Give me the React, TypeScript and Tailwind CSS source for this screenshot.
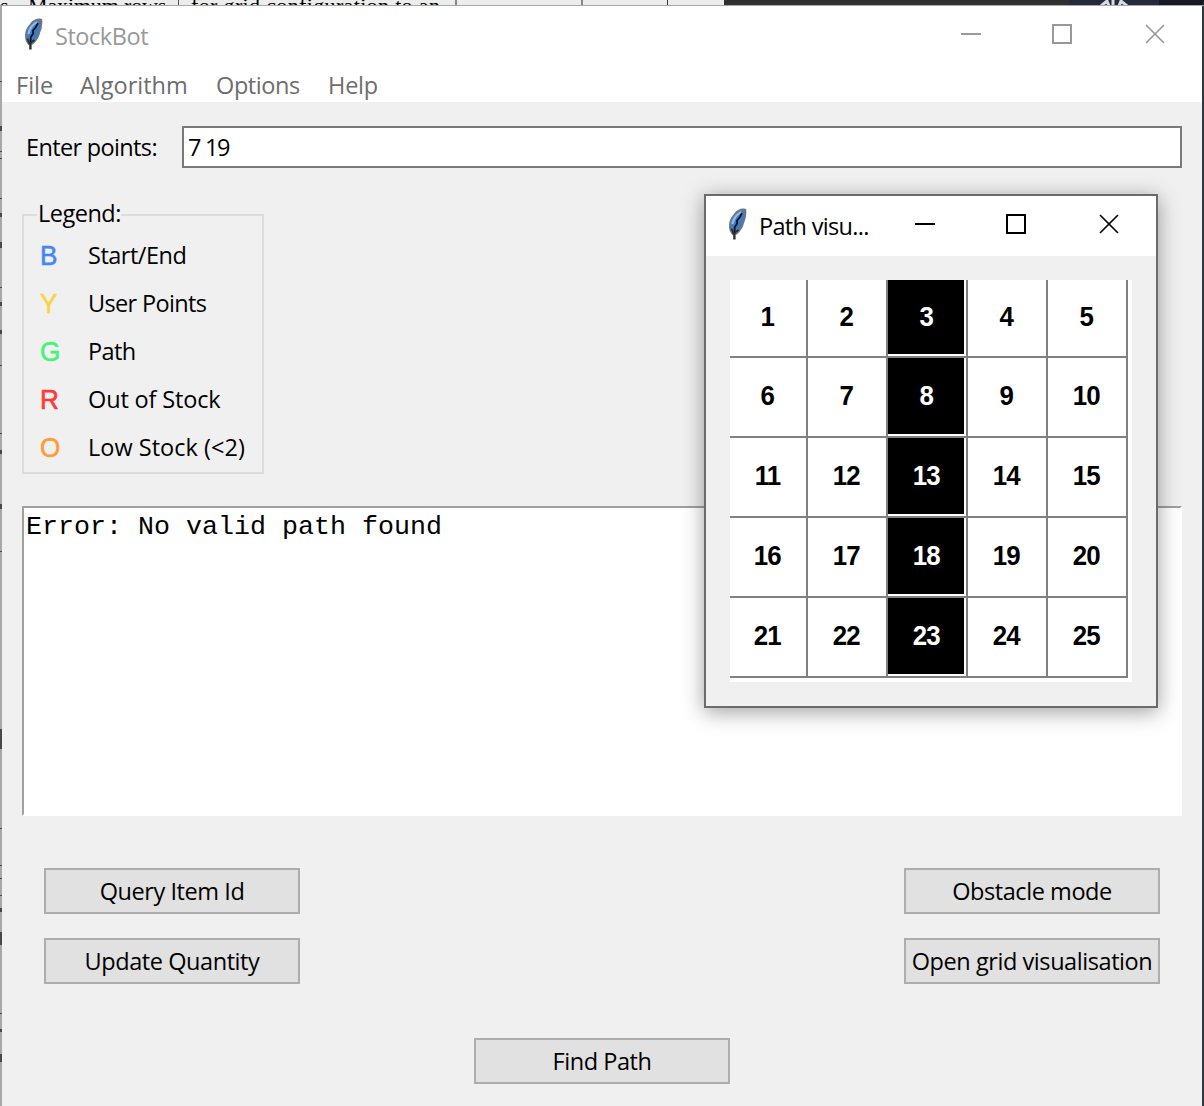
import type { ReactNode } from "react";

function Feather({ className = "" }: { className?: string }) {
  return (
    <svg viewBox="0 0 20 32" className={`h-8 w-5 ${className}`} fill="none">
      <path d="M18.3 1.6 C14.5 1 10 3 7.2 7 C4.5 10 2.6 14.5 3 18.5 C2.6 21 3.6 23.5 5.6 26 L9.6 25.6 C12.5 23 15 19 16 15.5 C18 11 18.8 6 18.3 1.6 Z" fill="#3f7cc6" stroke="#727679" strokeWidth="1.8" strokeLinejoin="round" />
      <path d="M14.5 4 C10 6 6.6 10 5.4 16" stroke="#8dbcf0" strokeWidth="2.2" />
      <path d="M15 5 L12.6 9.5 L10 12.5 L10.2 15.5 L7.8 19 L7.4 25" stroke="#0c1118" strokeWidth="1.8" />
      <path d="M4.4 20.5 L6.4 25.5 L11.5 22" stroke="#24282e" strokeWidth="1.7" />
      <path d="M7.4 24 V31.5" stroke="#2c2e30" strokeWidth="2.4" />
    </svg>
  );
}

function WindowButtons({ className }: { className: string }) {
  return (
    <svg viewBox="0 0 206 22" className={`h-[22px] w-[206px] ${className}`} fill="none" stroke="currentColor" strokeWidth="2">
      <path d="M1 11 H21" />
      <rect x="93" y="2" width="18" height="18" />
      <path d="M186 2 L204 20 M204 2 L186 20" strokeWidth="1.7" />
    </svg>
  );
}

function Button({ children, className = "" }: { children: ReactNode; className?: string }) {
  return (
    <button className={`flex h-[46px] w-64 items-center justify-center whitespace-nowrap border-2 border-[#adadad] bg-[#e1e1e1] pt-px tracking-[-0.43px] ${className}`}>
      {children}
    </button>
  );
}

const legend = [
  { letter: "B", label: "Start/End", color: "text-[#4287f5]", track: "tracking-[-0.5px]" },
  { letter: "Y", label: "User Points", color: "text-[#f5d742]", track: "tracking-[-0.65px]" },
  { letter: "G", label: "Path", color: "text-[#42f572]", track: "tracking-[-0.6px]" },
  { letter: "R", label: "Out of Stock", color: "text-[#ff3838]", track: "tracking-[-0.15px]" },
  { letter: "O", label: "Low Stock (<2)", color: "text-[#ff9c38]", track: "tracking-[0.02px]" },
];

/* Slivers of the document behind the window: gap above and height of each. */
const slivers = [
  "mt-[75px] h-px",
  "mt-[44px] h-[5px]",
  "mt-[20px] h-px",
  "mt-[6px] h-px",
  "mt-[39px] h-px",
  "mt-[14px] h-[4px]",
  "mt-[25px] h-[6px]",
  "mt-[39px] h-px",
  "mt-[14px] h-[4px]",
  "mt-[24px] h-[4px]",
  "mt-[31px] h-px",
  "mt-[67px] h-px",
  "mt-[16px] h-[4px]",
  "mt-[50px] h-[5px]",
  "mt-[42px] h-px",
  "mt-[177px] h-[20px]",
  "mt-[79px] h-px",
  "mt-[36px] h-px",
  "mt-[12px] h-px",
  "mt-[16px] h-px",
  "mt-[12px] h-[4px]",
  "mt-[20px] h-[13px]",
  "mt-[68px] h-px",
  "mt-[15px] h-[3px]",
  "mt-[22px] h-[8px]",
];

const cells = Array.from({ length: 25 }, (_, i) => i + 1);

function GridCell({ n }: { n: number }) {
  const blocked = n % 5 === 3;
  return (
    <div className="flex border-b-2 border-r-2 border-[#808080]">
      <div
        className={`flex flex-1 items-center justify-center ${
          blocked ? "mb-0.5 mr-0.5 bg-black pl-px text-white" : "pb-0.5 pr-px text-black"
        }`}
      >
        <span className="scale-x-[0.94]">{n}</span>
      </div>
    </div>
  );
}

function PathWindow() {
  return (
    <div className="absolute left-[704px] top-[194px] h-[514px] w-[454px] border-2 border-[#6b6b6b] bg-[#f0f0f0] shadow-[0_4px_20px_rgba(0,0,0,0.38)]">
      <div className="flex h-[60px] items-center bg-white">
        <Feather className="ml-[21px] -mt-1" />
        <span className="ml-3 mt-0.5 w-[155px] tracking-[-0.68px]">Path visu...</span>
        <WindowButtons className="-mt-1 text-black" />
      </div>
      <div className="ml-6 mt-6 h-[402px] w-[402px] bg-white">
        <div className="grid h-[398px] w-[398px] grid-cols-[78px_repeat(4,80px)] grid-rows-[78px_repeat(4,80px)] font-['Liberation_Sans',Arial,sans-serif] text-[27.5px] font-bold tracking-[-1px]">
          {cells.map((n) => (
            <GridCell key={n} n={n} />
          ))}
        </div>
      </div>
    </div>
  );
}

export default function App() {
  return (
    <div className="relative flex h-[1106px] w-[1204px] flex-col overflow-hidden bg-[#a8a8a8] font-['Open_Sans','Noto_Sans',sans-serif] text-[23.5px] leading-none text-black">
      <div className="flex h-1.5 shrink-0 overflow-hidden border-b border-[#a8a8a8] bg-[#ececec] font-['Liberation_Serif',serif] text-[22px] leading-[22px]">
        <div className="-mt-[5px] flex h-[22px] w-[724px] shrink-0 whitespace-nowrap">
          <span className="w-7 shrink-0">s.</span>
          <span className="w-[151px] shrink-0 border-r border-[#555] tracking-[-0.15px]">Maximum rows</span>
          <span className="w-[278px] shrink-0 border-r-2 border-[#888] pl-3 tracking-[0.35px]">for grid configuration to an</span>
          <span className="w-[126px] shrink-0 border-r-2 border-[#888]" />
          <span className="w-[85px] shrink-0 border-r border-[#333]" />
        </div>
        <div className="w-[345px] bg-[#303030]" />
        <div className="flex w-[90px] justify-center bg-[#24293b]">
          <svg viewBox="0 0 30 6" className="h-1.5 w-[30px]" stroke="#d8dae2" strokeWidth="3" fill="none">
            <path d="M2 6 L8 1 L10 6 M14 0 V6 M20 6 L22 1 L28 6" />
          </svg>
        </div>
        <div className="flex-1 bg-[#161824]" />
      </div>

      <div className="flex min-h-0 flex-1 border-r-2 border-[#33353f]">
        <div className="flex w-0.5 shrink-0 flex-col bg-[#a8a8a8]">
          {slivers.map((s, i) => (
            <div key={i} className={`shrink-0 bg-[#484848] ${s}`} />
          ))}
        </div>
        <main className="flex flex-1 flex-col bg-[#f0f0f0]">
          <header className="flex h-[60px] shrink-0 items-center bg-white text-[#999]">
            <Feather className="ml-[21px] -mt-1" />
            <span className="ml-3 mt-0.5 flex-1 tracking-[-0.45px]">StockBot</span>
            <WindowButtons className="-mt-1 mr-9" />
          </header>
          <nav className="flex h-9 shrink-0 items-center bg-white pl-[14px] pt-1 text-[#6d6d6d]">
            <span className="w-16">File</span>
            <span className="w-[136px]">Algorithm</span>
            <span className="w-28 tracking-[-0.4px]">Options</span>
            <span className="tracking-[-0.2px]">Help</span>
          </nav>

          <div className="mt-6 flex h-[42px] items-center">
            <label className="ml-6 w-[156px] pt-0.5 tracking-[-0.65px]">Enter points:</label>
            <div className="flex h-[42px] w-[1000px] items-center border-2 border-[#7a7a7a] bg-white pl-1 pt-0.5 tracking-[-1.3px]">7 19</div>
          </div>

          <section className="relative ml-5 mt-[46px] h-[260px] w-[242px] border-2 border-[#dcdcdc] pt-4">
            <h2 className="absolute -top-3.5 left-[13px] bg-[#f0f0f0] pl-px tracking-[-0.5px]">Legend:</h2>
            {legend.map((item) => (
              <div key={item.letter} className="flex h-12 items-center">
                <span className={`ml-4 w-12 font-['Liberation_Sans',Arial,sans-serif] text-[27.5px] [-webkit-text-stroke:0.6px_currentColor] ${item.color}`}>
                  <span className="inline-block origin-left scale-x-[0.95]">{item.letter}</span>
                </span>
                <span className={`whitespace-nowrap ${item.track}`}>{item.label}</span>
              </div>
            ))}
          </section>

          <div className="ml-5 mt-8 h-[310px] w-[1160px] border-2 border-b-white border-l-[#a0a0a0] border-r-white border-t-[#a0a0a0] bg-white pl-0.5 pt-1.5 font-['Liberation_Mono',monospace] text-[26.67px]">
            Error: No valid path found
          </div>

          <div className="ml-[42px] mt-[52px] flex w-[1116px] justify-between">
            <div className="flex flex-col gap-6">
              <Button>Query Item Id</Button>
              <Button>Update Quantity</Button>
            </div>
            <div className="flex flex-col gap-6">
              <Button>Obstacle mode</Button>
              <Button>Open grid visualisation</Button>
            </div>
          </div>
          <Button className="ml-[472px] mt-[54px]">Find Path</Button>
        </main>
      </div>
      <PathWindow />
    </div>
  );
}
